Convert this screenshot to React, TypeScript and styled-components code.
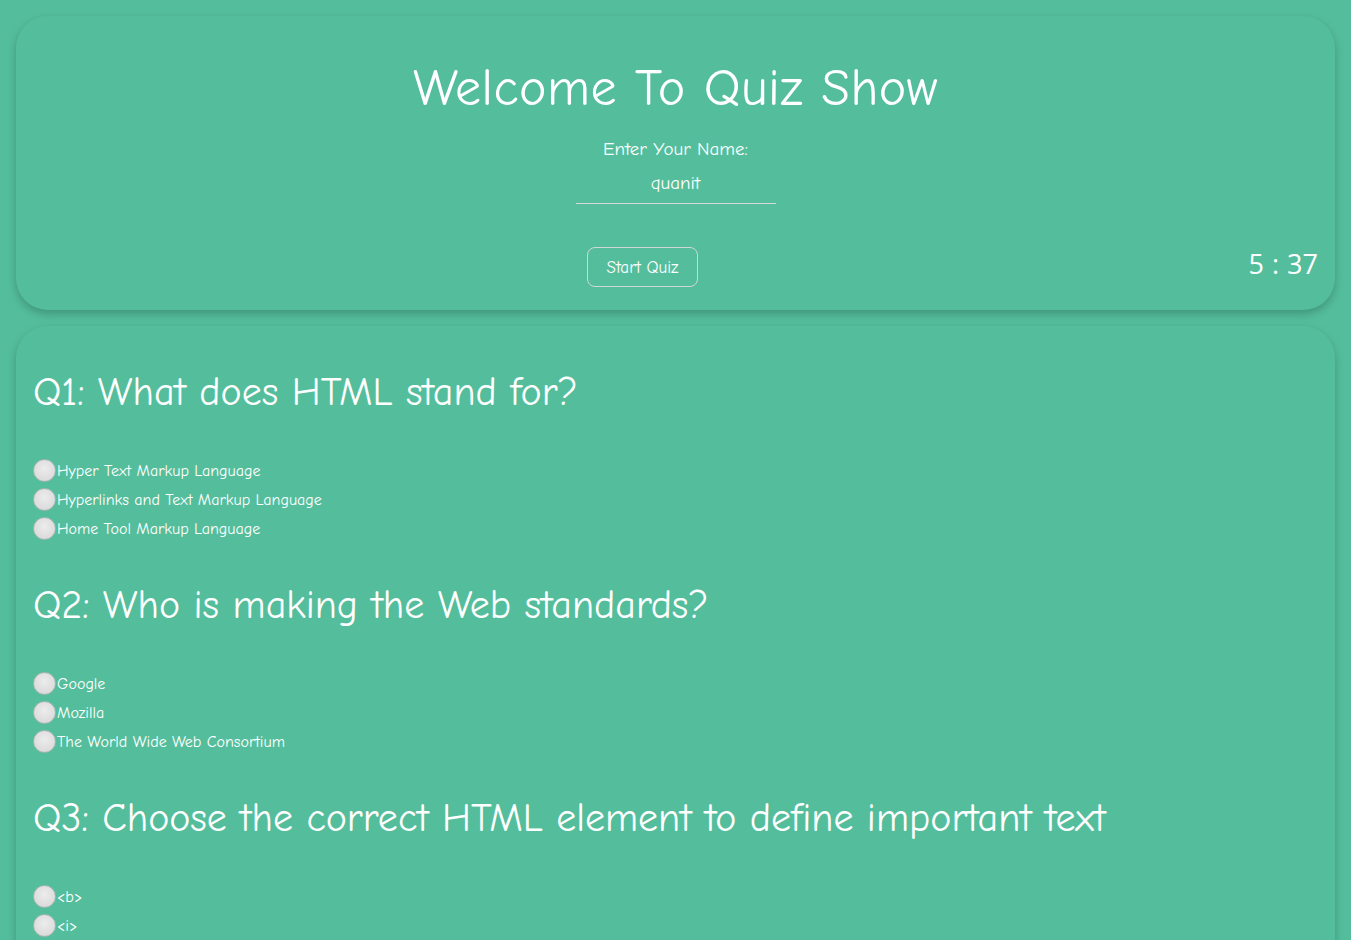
import React from "react";
import styled, { createGlobalStyle } from "styled-components";

const GlobalStyle = createGlobalStyle`
  html, body {
    margin: 0;
    padding: 0;
    background: #54be9c;
  }
  body {
    font-family: "Comic Sans MS", "Comic Neue", "Open Sans", sans-serif;
    color: #ffffff;
  }
`;

const Page = styled.div`
  display: flex;
  flex-direction: column;
  gap: 16px;
  padding: 16px 16px 0 16px;
  box-sizing: border-box;
  width: 1351px;
  height: 940px;
  overflow: hidden;
`;

const Card = styled.section`
  background: #54be9c;
  border-radius: 32px;
  box-shadow: 0 4px 10px rgba(0, 0, 0, 0.22);
  box-sizing: border-box;
`;

const Header = styled(Card)`
  flex-shrink: 0;
  height: 294px;
  display: grid;
  grid-template-columns: 1fr auto 1fr;
  padding: 0 16px;
`;

const Center = styled.div`
  grid-column: 2;
  display: flex;
  flex-direction: column;
  align-items: center;
`;

const Title = styled.h1`
  margin: 42px 0 0 0;
  font-size: 52px;
  font-weight: normal;
  line-height: 60px;
  letter-spacing: 0.5px;
`;

const NameLabel = styled.label`
  margin-top: 19px;
  font-size: 19px;
  line-height: 24px;
`;

const NameInput = styled.input`
  margin-top: 11px;
  width: 200px;
  box-sizing: border-box;
  background: transparent;
  border: none;
  border-bottom: 1px solid #d9d9d9;
  color: #ffffff;
  font-family: inherit;
  font-size: 19px;
  text-align: center;
  padding: 0 0 9px 0;
  outline: none;
`;

const StartButton = styled.button`
  margin: 43px 0 0 -66px;
  width: 111px;
  height: 40px;
  border: 1px solid #cfd8d4;
  border-radius: 8px;
  background: transparent;
  color: #ffffff;
  font-family: inherit;
  font-size: 17px;
  cursor: pointer;
`;

const TimerWrap = styled.div`
  grid-column: 3;
  display: flex;
  justify-content: flex-end;
  align-items: flex-end;
  padding-bottom: 30px;
`;

const Timer = styled.div`
  font-family: "Open Sans", "Liberation Sans", sans-serif;
  font-size: 27px;
  line-height: 32px;
  margin-right: 1px;
  word-spacing: 1px;
`;

const Body = styled(Card)`
  flex: 1;
  padding: 42px 17px 0 17px;
  border-bottom-left-radius: 0;
  border-bottom-right-radius: 0;
`;

const Question = styled.h2`
  margin: 0 0 42px 0;
  font-size: 40px;
  font-weight: normal;
  line-height: 49px;
`;

const Options = styled.div`
  display: flex;
  flex-direction: column;
  gap: 6px;
  margin-bottom: 41px;
`;

const OptionRow = styled.label`
  display: flex;
  align-items: center;
  font-size: 16px;
  line-height: 22px;
`;

const Radio = styled.input`
  appearance: none;
  margin: 0 1px 0 0;
  width: 23px;
  height: 23px;
  border-radius: 50%;
  background: radial-gradient(circle at 50% 40%, #ececec 0%, #dcdcdc 70%, #cfcfcf 100%);
  border: 1px solid #a9b3b0;
  box-sizing: border-box;
  flex-shrink: 0;
`;

const questions = [
  {
    q: "Q1: What does HTML stand for?",
    options: [
      "Hyper Text Markup Language",
      "Hyperlinks and Text Markup Language",
      "Home Tool Markup Language",
    ],
  },
  {
    q: "Q2: Who is making the Web standards?",
    options: ["Google", "Mozilla", "The World Wide Web Consortium"],
  },
  {
    q: "Q3: Choose the correct HTML element to define important text",
    options: ["<b>", "<i>", "<strong>", "<important>"],
  },
];

export default function App() {
  return (
    <>
      <GlobalStyle />
      <Page>
        <Header>
          <Center>
            <Title>Welcome To Quiz Show</Title>
            <NameLabel htmlFor="name">Enter Your Name:</NameLabel>
            <NameInput id="name" defaultValue="quanit" />
            <StartButton>Start Quiz</StartButton>
          </Center>
          <TimerWrap>
            <Timer>5 : 37</Timer>
          </TimerWrap>
        </Header>
        <Body>
          {questions.map((item, qi) => (
            <div key={qi}>
              <Question>{item.q}</Question>
              <Options>
                {item.options.map((o, oi) => (
                  <OptionRow key={oi}>
                    <Radio type="radio" name={`q${qi}`} />
                    {o}
                  </OptionRow>
                ))}
              </Options>
            </div>
          ))}
        </Body>
      </Page>
    </>
  );
}
